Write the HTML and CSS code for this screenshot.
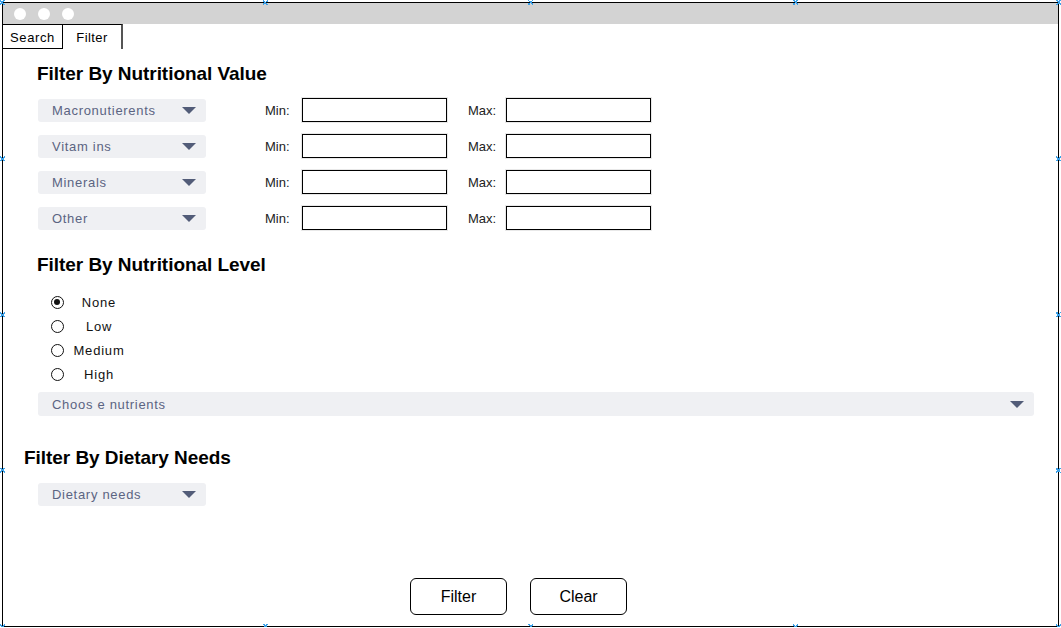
FILE: index.html
```html
<!DOCTYPE html>
<html>
<head>
<meta charset="utf-8">
<link rel="stylesheet" href="styles.css">
</head>
<body>
<div class="window">
  <div class="titlebar">
    <span class="dot"></span><span class="dot"></span><span class="dot"></span>
  </div>
  <div class="tabs">
    <div class="tab">Search</div>
    <div class="tab active">Filter</div>
  </div>
  <div class="content">
    <h2 class="heading">Filter By Nutritional Value</h2>
    <div class="rows">
      <div class="row">
        <div class="select small"><span>Macronutierents</span><i class="caret"></i></div>
        <label class="lbl min">Min:</label><div class="input"></div>
        <label class="lbl max">Max:</label><div class="input"></div>
      </div>
      <div class="row">
        <div class="select small"><span>Vitam ins</span><i class="caret"></i></div>
        <label class="lbl min">Min:</label><div class="input"></div>
        <label class="lbl max">Max:</label><div class="input"></div>
      </div>
      <div class="row">
        <div class="select small"><span>Minerals</span><i class="caret"></i></div>
        <label class="lbl min">Min:</label><div class="input"></div>
        <label class="lbl max">Max:</label><div class="input"></div>
      </div>
      <div class="row">
        <div class="select small"><span>Other</span><i class="caret"></i></div>
        <label class="lbl min">Min:</label><div class="input"></div>
        <label class="lbl max">Max:</label><div class="input"></div>
      </div>
    </div>

    <h2 class="heading h-level">Filter By Nutritional Level</h2>
    <div class="radios">
      <div class="radio"><span class="circle checked"></span><span class="rlabel">None</span></div>
      <div class="radio"><span class="circle"></span><span class="rlabel">Low</span></div>
      <div class="radio"><span class="circle"></span><span class="rlabel">Medium</span></div>
      <div class="radio"><span class="circle"></span><span class="rlabel">High</span></div>
    </div>
    <div class="select wide"><span>Choos e nutrients</span><i class="caret"></i></div>

    <h2 class="heading h-diet">Filter By Dietary Needs</h2>
    <div class="select small"><span>Dietary needs</span><i class="caret"></i></div>

    <div class="buttons">
      <button class="btn">Filter</button>
      <button class="btn">Clear</button>
    </div>
  </div>
</div>
<div class="handles">
  <span class="hd t1"></span><span class="hd t2"></span><span class="hd t3"></span><span class="hd t4"></span><span class="hd t5"></span>
  <span class="hd b1"></span><span class="hd b2"></span><span class="hd b3"></span><span class="hd b4"></span><span class="hd b5"></span>
  <span class="hd l1"></span><span class="hd l2"></span><span class="hd l3"></span>
  <span class="hd r1"></span><span class="hd r2"></span><span class="hd r3"></span>
</div>
</body>
</html>
```
FILE: styles.css
```css
* { box-sizing: border-box; }
html, body { margin: 0; padding: 0; background: #fff; }
body {
  font-family: "Liberation Sans", Arial, sans-serif;
  color: #000;
  padding: 2px 0 0 2px;
  position: relative;
}
.window {
  width: 1057px;
  height: 625px;
  border: 1px solid #000;
  display: flex;
  flex-direction: column;
}
.titlebar {
  height: 21px;
  background: #d3d3d3;
  display: flex;
  align-items: center;
  gap: 12px;
  padding-left: 11px;
  flex: none;
}
.dot {
  width: 12px;
  height: 12px;
  border-radius: 50%;
  background: #fff;
}
.tabs {
  display: flex;
  height: 25px;
  flex: none;
}
.tab {
  font-size: 13px;
  height: 25px;
  line-height: 25px;
  border: 1px solid #000;
  border-left: none;
  letter-spacing: 0.6px;
  width: 60px;
  text-align: center;
}
.tab.active {
  border-bottom: none;
  border-right: 2px solid #555;
  letter-spacing: 0.4px;
}
.content {
  flex: 1;
  display: flex;
  flex-direction: column;
  padding: 14px 0 0 35px;
}
.heading {
  margin: 0 0 0 -1px;
  font-size: 19px;
  font-weight: bold;
  letter-spacing: -0.05px;
  line-height: 21px;
}
.rows {
  display: flex;
  flex-direction: column;
  gap: 12px;
  margin-top: 14px;
}
.row {
  display: flex;
  align-items: center;
  height: 24px;
}
.select {
  height: 23px;
  background: #eff0f3;
  border-radius: 3px;
  display: flex;
  align-items: center;
  justify-content: space-between;
  padding: 0 10px 0 14px;
  font-size: 13px;
  color: #5b6482;
  letter-spacing: 0.7px;
}
.select.small { width: 168px; }
.select.wide { width: 996px; height: 24px; margin-top: 6px; }
.caret {
  width: 0;
  height: 0;
  border-left: 7px solid transparent;
  border-right: 7px solid transparent;
  border-top: 7px solid #525c78;
}
.lbl {
  font-size: 13px;
  color: #222;
  letter-spacing: 0;
}
.lbl.min { margin-left: 59px; width: 37px; }
.lbl.max { margin-left: 21px; width: 38px; }
.input {
  width: 145px;
  height: 24px;
  border: 1px solid #000;
  box-shadow: 0 0 0 1px #e8e8e8;
}
.h-level { margin-top: 24px; }
.radios {
  display: flex;
  flex-direction: column;
  margin-top: 15px;
  margin-left: 13px;
}
.radio {
  display: flex;
  align-items: center;
  height: 24px;
}
.circle {
  width: 13px;
  height: 13px;
  border: 1.5px solid #111;
  border-radius: 50%;
  position: relative;
  flex: none;
}
.circle.checked::after {
  content: "";
  position: absolute;
  left: 2px; top: 2px;
  width: 6px; height: 6px;
  border-radius: 50%;
  background: #111;
}
.rlabel {
  width: 52px;
  margin-left: 9px;
  text-align: center;
  font-size: 13px;
  letter-spacing: 0.8px;
  color: #111;
}
.h-diet { margin-top: 31px; margin-left: -14px; }
.h-diet + .select { margin-top: 15px; }
.buttons {
  margin-top: auto;
  margin-bottom: 11px;
  display: flex;
  justify-content: center;
  gap: 23px;
  margin-left: -59px;
}
.btn {
  width: 97px;
  height: 37px;
  border: 1px solid #000;
  border-radius: 6px;
  background: #fff;
  font-family: "Liberation Sans", Arial, sans-serif;
  font-size: 16px;
  color: #000;
  padding: 0;
}
.handles { position: absolute; left: 0; top: 0; }
.hd {
  position: absolute;
  width: 5px;
  height: 5px;
  background:
    linear-gradient(45deg, transparent 40%, #3aa0e8 40%, #3aa0e8 60%, transparent 60%),
    linear-gradient(-45deg, transparent 40%, #3aa0e8 40%, #3aa0e8 60%, transparent 60%);
}
.t1, .t2, .t3, .t4, .t5 { top: 0; }
.b1, .b2, .b3, .b4, .b5 { top: 624px; }
.t1, .b1, .l1, .l2, .l3 { left: 0; }
.t2, .b2 { left: 263px; }
.t3, .b3 { left: 528px; }
.t4, .b4 { left: 793px; }
.t5, .b5, .r1, .r2, .r3 { left: 1056px; }
.l1, .r1 { top: 156px; }
.l2, .r2 { top: 312px; }
.l3, .r3 { top: 468px; }
```
